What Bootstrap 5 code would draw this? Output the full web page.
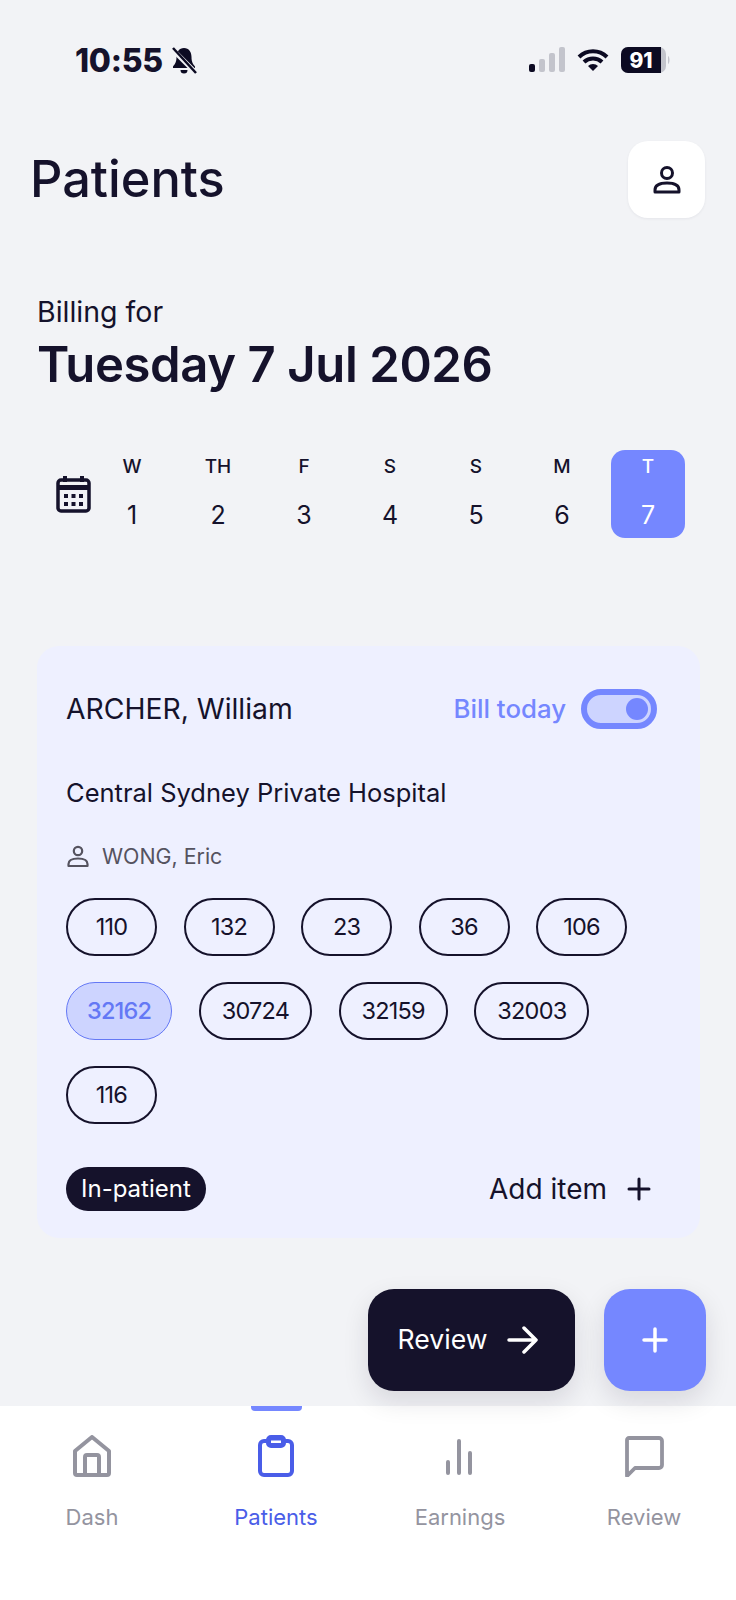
<!DOCTYPE html>
<html lang="en">
<head>
  <meta charset="UTF-8" />
  <meta name="viewport" content="width=device-width, initial-scale=1.0" />
  <title>Patients</title>
  <link href="https://cdn.jsdelivr.net/npm/bootstrap@5.3.3/dist/css/bootstrap.min.css" rel="stylesheet">
  <style>
    body { background: #f2f3f6; color: #15122b; font-family: Inter, "Open Sans", sans-serif; margin: 0; }
    .phone { height: 1600px; width: 736px; position: relative; overflow: hidden; }
    .status-bar { height: 141px; padding: 43px 65px 0 75px; }
    .clock { font: 800 32px/36px Inter, sans-serif; letter-spacing: -.3px; }
    .page-head { height: 77px; padding: 0 31px 0 30px; }
    .page-title { font-size: 50.5px; font-weight: 500; margin: 0; }
    .profile-btn { width: 77px; height: 77px; background: #fff; border-radius: 20px; border: 0; box-shadow: 0 1px 3px rgba(21,18,43,.06); }
    .billing { padding: 74px 37px 0; }
    .billing-for { font-size: 28.5px; line-height: 40px; }
    .billing-date { font-size: 49px; font-weight: 600; line-height: 66px; letter-spacing: -.4px; margin: 0; }
    .day-strip { padding: 0 51px 0 56px; margin-top: 52px; }
    .day-cell { width: 74px; height: 88px; margin-left: 12px; border-radius: 14px; padding-top: 5px; font-size: 25px; line-height: 36px; text-align: center; }
    .day-cell:first-of-type { margin-left: 4px; }
    .day-cell span { display: block; font-size: 19px; font-weight: 500; line-height: 24px; margin-bottom: 18px; }
    .day-cell.active-day { background: #7587ff; color: #fff; }
    .patient-card { margin: 108px 36px 0 37px; height: 592px; background: #eef0ff; border: 0; border-radius: 22px; padding: 43px 29px 0; color: #15122b; }
    .patient-name { font-size: 28.3px; line-height: 36px; }
    .bill-today { font-size: 25.800px; font-weight: 500; color: #7587ff; }
    .switch-pill { width: 76px; height: 40px; border: 6px solid #7587ff; border-radius: 20px; background: #cdd4ff; padding-right: 3px; margin: 0 14px 0 15px; }
    .switch-dot { width: 22px; height: 22px; border-radius: 50%; background: #7587ff; }
    .hospital { font-size: 25.5px; line-height: 32px; margin-top: 48px; }
    .doctor { font-size: 21.4px; line-height: 28px; margin-top: 33px; color: #55535f; }
    .chips { gap: 26px 26.5px; margin-top: 28px; }
    .code-chip { min-width: 91px; height: 58px; padding: 0 21px; border: 2px solid #15122b; border-radius: 29px; font-size: 23.5px; letter-spacing: -.8px; background: transparent; color: #15122b; }
    .code-chip.picked { background: #cdd4ff; border-color: #6478f5; border-width: 1.5px; color: #6478f5; font-weight: 500; padding: 0 20px; }
    .card-foot { margin-top: 43px; padding-right: 20px; }
    .visit-type { font-size: 24px; font-weight: 400; height: 44px; padding: 0 15px; background: #15122b; color: #fff; border-radius: 22px; }
    .add-item { font-size: 28px; gap: 20px; }
    .float-actions { position: absolute; right: 30px; top: 1289px; gap: 29px; z-index: 2; }
    .float-btn { height: 102px; border-radius: 26px; border: 0; color: #fff; box-shadow: 0 10px 26px rgba(21,18,43,.12); }
    .float-review { width: 207px; background: #15122b; font-size: 26.6px; gap: 20px; }
    .float-review svg { margin-right: 6px; }
    .float-add { width: 102px; background: #7587ff; }
    .tab-bar { position: absolute; left: 0; right: 0; bottom: 0; height: 194px; background: #fff; }
    .tab-item { width: 184px; padding-top: 29px; color: #94949f; font-size: 22px; line-height: 28px; text-align: center; position: relative; text-decoration: none; }
    .tab-item svg { display: block; margin: 0 auto 26px; }
    .tab-item.current { color: #4a5de8; }
    .tab-mark { position: absolute; top: 0; left: 67px; width: 51px; height: 5px; background: #7587ff; border-radius: 0 0 4px 4px; }
  </style>
</head>
<body>
  <div class="phone">
    <div class="status-bar d-flex justify-content-between align-items-start">
      <div class="d-flex align-items-center gap-2">
        <span class="clock">10:55</span>
        <svg width="26" height="30" viewBox="0 0 26 30"><path d="M13 2c-5 0-7.500 4-7.500 9 0 5-1.500 7-3.500 9.500v1.500h22v-1.500c-2-2.500-3.500-4.500-3.500-9.500 0-5-2.500-9-7.500-9z" fill="#0c0a22"/><path d="M9.500 24a3.500 3.500 0 0 0 7 0z" fill="#0c0a22"/><path d="M1 3l24 24" stroke="#f2f3f6" stroke-width="5"/><path d="M2 2l23 25" stroke="#0c0a22" stroke-width="2.500"/></svg>
      </div>
      <div class="d-flex align-items-center gap-2 mt-1">
        <svg width="36" height="26" viewBox="0 0 36 26"><rect x="0" y="17" width="6" height="8" rx="2" fill="#0c0a22"/><rect x="10" y="12" width="6" height="13" rx="2" fill="#c3c4cc"/><rect x="20" y="6" width="6" height="19" rx="2" fill="#c3c4cc"/><rect x="30" y="0" width="6" height="25" rx="2" fill="#c3c4cc"/></svg>
        <svg class="ms-1" width="32" height="24" viewBox="0 0 32 24"><path d="M2 9a20 20 0 0 1 28 0M7 14a13 13 0 0 1 18 0" fill="none" stroke="#0c0a22" stroke-width="4"/><path d="M11 18a7 7 0 0 1 10 0l-5 5z" fill="#0c0a22"/></svg>
        <svg class="ms-1" width="50" height="26" viewBox="0 0 50 26"><rect x="0" y="0" width="45" height="26" rx="7" fill="#c3c4cc"/><path d="M7 0h33v26H7a7 7 0 0 1-7-7V7a7 7 0 0 1 7-7z" fill="#0c0a22"/><path d="M47 9c2 1 2 7 0 8z" fill="#c3c4cc"/><text x="20" y="21" text-anchor="middle" font-family="Inter, sans-serif" font-weight="800" font-size="21" fill="#fff">91</text></svg>
      </div>
    </div>

    <header class="page-head d-flex justify-content-between align-items-center">
      <h1 class="page-title">Patients</h1>
      <button class="btn profile-btn d-flex align-items-center justify-content-center p-0" aria-label="Profile">
        <svg width="30" height="30" viewBox="0 0 30 30" fill="none" stroke="#15122b" stroke-width="3"><circle cx="15" cy="8" r="5.500"/><path d="M3 27v-2c0-5 5-7 12-7s12 2 12 7v2z" stroke-linejoin="round"/></svg>
      </button>
    </header>

    <section class="billing">
      <div class="billing-for">Billing for</div>
      <h2 class="billing-date">Tuesday 7 Jul 2026</h2>
    </section>

    <div class="day-strip d-flex align-items-center">
      <svg width="35" height="38" viewBox="0 0 35 38"><path d="M9 1v6M26 1v6" stroke="#15122b" stroke-width="4"/><rect x="2" y="5" width="31" height="31" rx="3" fill="none" stroke="#15122b" stroke-width="3.500"/><rect x="2" y="10" width="31" height="5" fill="#15122b"/><g fill="#15122b"><rect x="8" y="19" width="4" height="4"/><rect x="15.500" y="19" width="4" height="4"/><rect x="23" y="19" width="4" height="4"/><rect x="8" y="27" width="4" height="4"/><rect x="15.500" y="27" width="4" height="4"/><rect x="23" y="27" width="4" height="4"/></g></svg>
      <div class="day-cell"><span>W</span>1</div>
      <div class="day-cell"><span>TH</span>2</div>
      <div class="day-cell"><span>F</span>3</div>
      <div class="day-cell"><span>S</span>4</div>
      <div class="day-cell"><span>S</span>5</div>
      <div class="day-cell"><span>M</span>6</div>
      <div class="day-cell active-day"><span>T</span>7</div>
    </div>

    <div class="card patient-card">
      <div class="d-flex justify-content-between align-items-center">
        <div class="patient-name">ARCHER, William</div>
        <div class="d-flex align-items-center">
          <span class="bill-today">Bill today</span>
          <div class="switch-pill d-flex align-items-center justify-content-end"><div class="switch-dot"></div></div>
        </div>
      </div>
      <div class="hospital">Central Sydney Private Hospital</div>
      <div class="doctor d-flex align-items-center gap-2">
        <svg class="me-1" width="24" height="24" viewBox="0 0 24 24" fill="none" stroke="#55535f" stroke-width="2.200"><circle cx="12" cy="7" r="4.200"/><path d="M2.500 22v-2c0-4 4-5.500 9.500-5.500s9.500 1.500 9.500 5.500v2z" stroke-linejoin="round"/></svg>
        WONG, Eric
      </div>
      <div class="chips d-flex flex-wrap">
        <div class="code-chip d-flex align-items-center justify-content-center">110</div>
        <div class="code-chip d-flex align-items-center justify-content-center">132</div>
        <div class="code-chip d-flex align-items-center justify-content-center">23</div>
        <div class="code-chip d-flex align-items-center justify-content-center">36</div>
        <div class="code-chip d-flex align-items-center justify-content-center">106</div>
        <div class="code-chip picked d-flex align-items-center justify-content-center">32162</div>
        <div class="code-chip d-flex align-items-center justify-content-center">30724</div>
        <div class="code-chip d-flex align-items-center justify-content-center">32159</div>
        <div class="code-chip d-flex align-items-center justify-content-center">32003</div>
        <div class="code-chip d-flex align-items-center justify-content-center">116</div>
      </div>
      <div class="card-foot d-flex justify-content-between align-items-center">
        <span class="badge visit-type d-flex align-items-center">In-patient</span>
        <div class="add-item d-flex align-items-center">
          Add item
          <svg width="24" height="24" viewBox="0 0 24 24" stroke="#15122b" stroke-width="3" stroke-linecap="round"><path d="M12 2v20M2 12h20"/></svg>
        </div>
      </div>
    </div>

    <div class="float-actions d-flex">
      <button class="btn float-btn float-review d-flex align-items-center justify-content-center p-0">
        Review
        <svg width="32" height="30" viewBox="0 0 32 30" fill="none" stroke="#fff" stroke-width="3.500" stroke-linecap="round" stroke-linejoin="round"><path d="M2 15h27M17 3l12 12-12 12"/></svg>
      </button>
      <button class="btn float-btn float-add d-flex align-items-center justify-content-center p-0" aria-label="Add">
        <svg width="28" height="28" viewBox="0 0 28 28" stroke="#fff" stroke-width="3.500" stroke-linecap="round"><path d="M14 3v22M3 14h22"/></svg>
      </button>
    </div>

    <nav class="tab-bar d-flex">
      <a class="tab-item" href="#">
        <svg width="40" height="42" viewBox="0 0 40 42" fill="none" stroke="#94949f" stroke-width="4" stroke-linejoin="round"><path d="M20 2L37 16V38a2 2 0 0 1-2 2H5a2 2 0 0 1-2-2V16z"/><path d="M13 40V22a2 2 0 0 1 2-2h10a2 2 0 0 1 2 2v18"/></svg>
        Dash
      </a>
      <a class="tab-item current" href="#">
        <span class="tab-mark"></span>
        <svg width="36" height="42" viewBox="0 0 36 42" fill="none" stroke="#4a5de8" stroke-width="4" stroke-linejoin="round"><rect x="2" y="6" width="32" height="34" rx="4"/><rect x="10" y="2" width="16" height="9" rx="3" fill="#4a5de8"/><rect x="13" y="5.500" width="10" height="2.500" fill="#fff" stroke="none"/></svg>
        Patients
      </a>
      <a class="tab-item" href="#">
        <svg width="30" height="42" viewBox="0 0 30 42" fill="none" stroke="#94949f" stroke-width="4" stroke-linecap="round"><path d="M3 27v11M14 6v32M25 18v20"/></svg>
        Earnings
      </a>
      <a class="tab-item" href="#">
        <svg width="40" height="42" viewBox="0 0 40 42" fill="none" stroke="#94949f" stroke-width="3.800" stroke-linejoin="round"><path d="M5 3h30a3 3 0 0 1 3 3v24a3 3 0 0 1-3 3H11l-8 8V5a2 2 0 0 1 2-2z"/></svg>
        Review
      </a>
    </nav>
  </div>
  <script src="https://cdn.jsdelivr.net/npm/bootstrap@5.3.3/dist/js/bootstrap.bundle.min.js"></script>
</body>
</html>
